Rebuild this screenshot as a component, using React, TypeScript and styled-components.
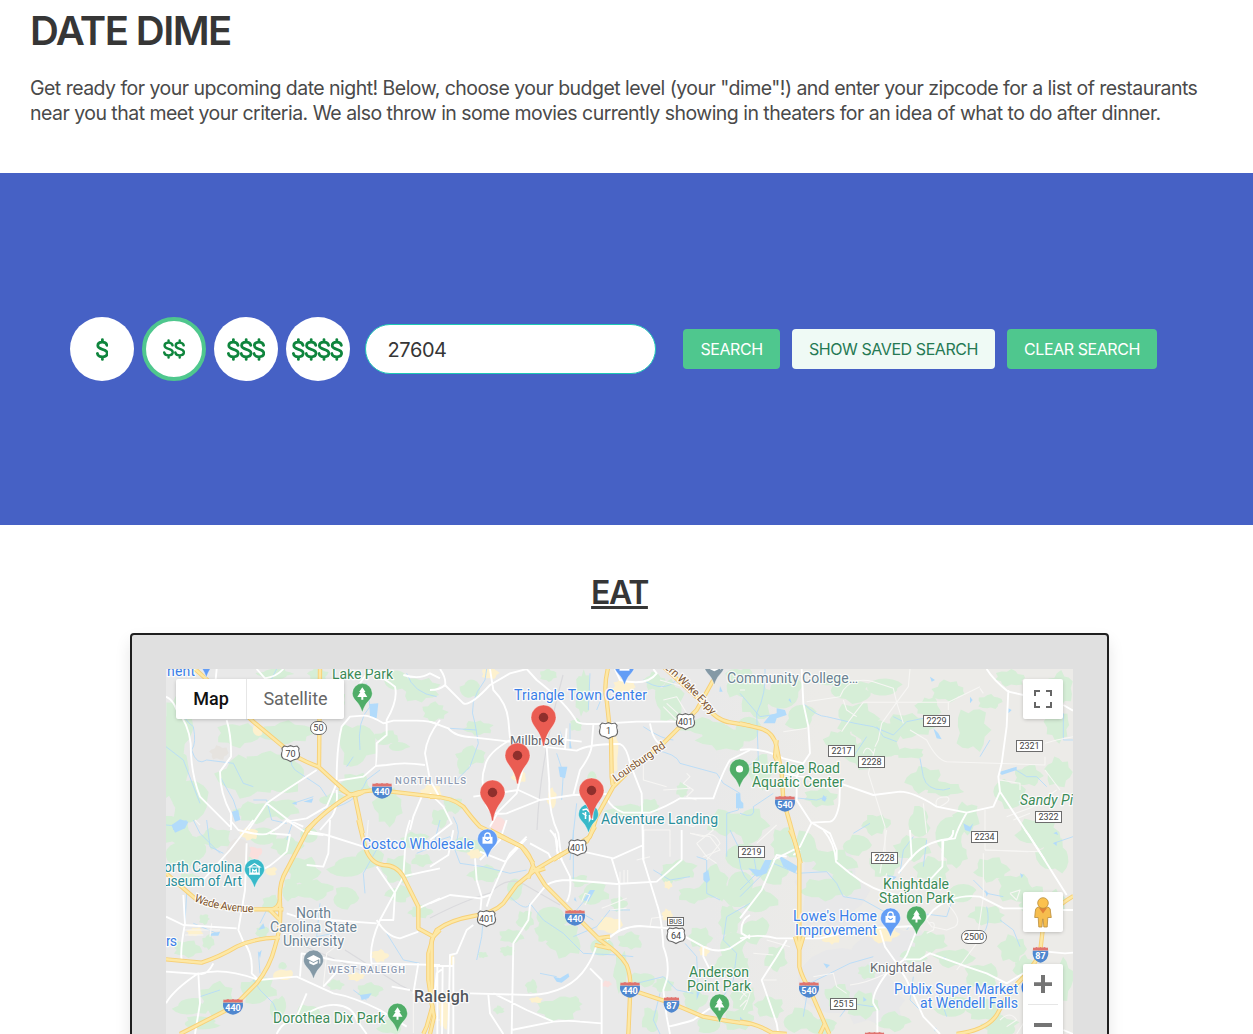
import React, { useState } from 'react';
import styled, { createGlobalStyle, css } from 'styled-components';

const GlobalStyle = createGlobalStyle`
  *, *::before, *::after { box-sizing: border-box; }
  body { margin: 0; background: #fff; font-family: Inter, 'Liberation Sans', sans-serif; color: #4a4a4a; }
  button, input { font-family: inherit; }
`;

const Page = styled.div`
  height: 1034px;
  overflow: hidden;
  display: flex;
  flex-direction: column;
`;

const Header = styled.header`
  height: 173px;
  flex: none;
  padding: 6px 30px 0;
`;

const Title = styled.h1`
  margin: 0;
  font-size: 40px;
  line-height: 50px;
  font-weight: 600;
  letter-spacing: -1.55px;
  color: #363636;
`;

const Intro = styled.p`
  margin: 0;
  font-size: 19.5px;
  line-height: 25px;
  white-space: nowrap;
  letter-spacing: -0.53px;
`;

const IntroBlock = styled.div`
  margin-top: 20px;
`;

const Hero = styled.section`
  height: 352px;
  flex: none;
  background: #4661c5;
  display: flex;
  align-items: center;
  padding-left: 70px;
`;

const Budgets = styled.div`
  display: flex;
  gap: 8px;
`;

const BudgetButton = styled.button<{ $active: boolean }>`
  width: 64px;
  height: 64px;
  padding: 0;
  display: flex;
  align-items: center;
  justify-content: center;
  border-radius: 50%;
  background: #fff;
  border: ${(p) => (p.$active ? '4px solid #4fc78e' : '0')};
`;

const Zip = styled.input`
  width: 291px;
  height: 50px;
  margin: 0 0 0 15px;
  padding: 1px 21.5px 0;
  border: 1px solid #1fc8b5;
  border-radius: 25px;
  background: #fff;
  color: #363636;
  font-size: 20px;
  letter-spacing: -0.4px;
  outline: none;
`;

const Actions = styled.div`
  display: flex;
  gap: 12px;
  margin-left: 27px;
`;

const Action = styled.button<{ $w: number; $light?: boolean }>`
  width: ${(p) => p.$w}px;
  height: 40px;
  padding: 0;
  border: 0;
  border-radius: 4px;
  font-size: 16px;
  letter-spacing: -0.43px;
  white-space: nowrap;
  ${(p) =>
    p.$light
      ? css`
          background: #effaf5;
          color: #257953;
        `
      : css`
          background: #4fc78e;
          color: #fff;
        `}
`;

const Eat = styled.section`
  flex: none;
  width: 1239px;
  padding-top: 48px;
  display: flex;
  flex-direction: column;
  align-items: center;
`;

const EatTitle = styled.h2`
  margin: 0 0 20px;
  font-size: 32px;
  line-height: 40px;
  font-weight: 600;
  letter-spacing: -1.4px;
  color: #363636;
  text-decoration: underline;
  text-decoration-thickness: 3px;
  text-underline-offset: 2px;
  text-decoration-skip-ink: none;
`;

const MapCard = styled.div`
  width: 979px;
  height: 500px;
  padding: 34px;
  border: 2px solid #1f1f1f;
  border-radius: 4px;
  background: #e0e0e0;
  box-shadow: 0 8px 16px rgba(10, 10, 10, 0.1);
`;

const MapFrame = styled.div`
  position: relative;
  width: 907px;
  height: 430px;
  overflow: hidden;
  background: #e9e9e9;
  font-family: Roboto, sans-serif;
`;

const MapDrawing = styled.svg`
  display: block;
  width: 907px;
  height: 430px;
  font-family: Roboto, sans-serif;
`;

const MapType = styled.div`
  position: absolute;
  left: 10px;
  top: 10px;
  display: flex;
  height: 40px;
  background: #fff;
  border-radius: 2px;
  box-shadow: 0 1px 4px -1px rgba(0, 0, 0, 0.3);
`;

const MapTab = styled.button<{ $on?: boolean }>`
  width: ${(p) => (p.$on ? 70 : 98)}px;
  padding: 0;
  border: 0;
  border-left: ${(p) => (p.$on ? '0' : '1px solid #e6e6e6')};
  background: transparent;
  font-family: Roboto, sans-serif;
  font-size: 18px;
  line-height: 40px;
  font-weight: ${(p) => (p.$on ? 500 : 400)};
  letter-spacing: -0.05px;
  color: ${(p) => (p.$on ? '#111' : '#666')};
`;

const Controls = styled.div`
  position: absolute;
  right: 10px;
  top: 10px;
  width: 40px;
  display: flex;
  flex-direction: column;
`;

const Control = styled.button<{ $top?: number; $h?: number }>`
  margin: ${(p) => p.$top ?? 0}px 0 0;
  height: ${(p) => p.$h ?? 40}px;
  padding: 0;
  border: 0;
  border-radius: 2px;
  background: #fff;
  box-shadow: 0 1px 4px -1px rgba(0, 0, 0, 0.3);
  display: flex;
  align-items: center;
  justify-content: center;
`;

const Dollars = ({ count, small }: { count: number; small: boolean }) => {
  const k = small ? 0.87 : 1;
  const w = count * 12.8;
  return (
    <svg width={w * k} height={23 * k} viewBox={`0 0 ${w} 23`} fill="none" stroke="#0f853d" strokeWidth={2.8} strokeLinecap="round">
      {Array.from({ length: count }, (_, i) => (
        <path
          key={i}
          transform={`translate(${i * 12.8} 0)`}
          d="M11 7.3C10.5 5.3 8.8 4.2 6.4 4.2C3.7 4.2 1.8 5.5 1.8 7.6C1.8 9.9 4 10.7 6.4 11.3C9.2 12 11.2 12.9 11.2 15.3C11.2 17.5 9.2 18.8 6.4 18.8C3.6 18.8 1.8 17.5 1.4 15.5M6.4 1.6V4M6.4 19V21.4"
        />
      ))}
    </svg>
  );
};

/* Map geometry: every sheet has its own origin and is drawn at three units to the pixel. */
type Sheet = 'A' | 'B' | 'C' | 'D' | 'E' | 'F';
const origin: Record<Sheet, [number, number]> = {
  A: [120, 620], B: [430, 660], C: [740, 660], D: [120, 820], E: [430, 830], F: [740, 830],
};
type Layer = Partial<Record<Sheet, string>>;

const highways: Layer = {
  A: 'M215 138L262 180L400 305L490 380Q520 412 595 440L650 490L690 525M600 147L597 440M560 630Q640 550 700 522Q740 508 790 512L960 532M660 505Q700 540 735 512M705 530L728 640',
  B: 'M0 410Q65 410 100 440Q130 480 150 500L275 560L310 610M535 20Q520 80 530 120L543 240L545 350L548 375M850 60L800 150L700 250L610 320L550 380L500 470L480 530L370 600M695 15L820 130Q860 182 900 187L960 197',
  C: 'M0 190L60 205Q100 215 110 260L125 340L130 420L150 490L182 610M110 240L105 290L125 330',
  D: 'M590 0L560 35L500 150Q475 190 480 250Q485 320 465 380Q450 440 410 490L340 560L180 642M715 0L735 80Q750 130 790 135Q830 135 850 170L895 260L895 325L940 350L960 330M138 160L225 235Q290 268 400 268L490 268M138 418L245 428Q300 410 350 380Q400 355 480 352M940 350L925 400L925 480L937 560L920 620L910 642M450 270Q480 265 480 235M450 270L480 300',
  E: 'M180 0L275 50Q300 70 310 110L345 165L410 230L510 330Q570 370 590 405Q605 440 600 500L595 612M495 -10L470 35L390 75L315 120L260 165L220 220Q190 250 130 258Q60 270 20 300L5 330L5 520L12 560L0 612M295 145L310 105M315 125L345 115M605 480L725 520L820 560Q900 575 960 582M495 345L540 355M540 320L500 325',
  F: 'M150 0Q170 40 178 90L178 410Q185 440 210 480L268 612M0 575Q50 580 95 608L140 612M1000 198Q920 245 908 300L900 370Q870 430 810 480Q790 520 770 555Q740 600 650 612M165 320L178 360L190 320M240 612L255 580',
};

const streets: Layer = {
  A: 'M138 230Q160 240 170 270Q205 310 212 370Q212 460 240 530L330 620M290 147L285 200M320 300Q335 350 333 410L300 455Q300 520 333 580L333 630M590 450L490 515L440 550L385 630M440 550L505 600L550 620M500 605L560 595L620 560L650 490M410 147L435 175Q470 170 490 147M650 480Q650 380 665 320L690 290L730 287Q750 285 790 310L820 302L890 302Q930 302 960 315M740 147Q800 180 825 200Q835 240 800 300L800 345L770 370Q770 440 765 440L730 470L655 482M765 438L800 435Q850 425 915 435M850 165Q900 180 930 160L960 175M960 300Q920 350 915 400L930 480L955 525M905 530L880 590L870 630M650 510Q655 560 635 590L600 630M750 147L720 190',
  B: 'M0 185L55 205Q75 230 130 232L240 245M0 90Q30 90 45 75L100 130Q120 140 180 75L240 40L290 27M30 27Q50 55 45 80M180 27L190 90Q230 130 235 180L240 235M290 27L320 60Q410 130 440 185Q450 193 500 192L620 185L760 185M340 260L440 272Q480 250 570 252Q590 260 600 310L635 400L640 600M490 195L485 260Q480 290 450 330L430 405M350 260L358 370Q355 460 385 520L395 600M405 265L410 205M240 240Q170 280 165 320Q150 360 165 400Q160 470 230 460L330 420L430 405L530 402M530 415Q545 445 580 458L660 458Q710 440 750 415L850 415Q880 330 900 300L960 270M180 500L205 455L260 400L280 320M0 400L40 440L65 490L0 540M130 410L265 390L330 420M230 480L210 540L150 600M555 27L570 60Q650 80 680 40L670 27M660 190Q670 250 700 255M370 235Q420 240 455 245M385 600L375 520',
  C: 'M185 27L190 130L205 200L210 280L190 310M190 310L130 295Q60 260 0 270M190 310L170 350L170 420L215 490M130 340L300 370L400 405L480 395Q520 395 590 440L680 458L760 440L780 395L915 600M740 27Q760 60 805 95L850 105M805 90L800 200L785 310L775 350L780 395M300 370L298 430Q290 480 270 485L215 488L180 560L100 600M215 488L270 520L290 570L290 600M680 458Q650 510 645 535L605 540Q540 555 510 600M607 540L607 600M970 135L999 152',
  D: 'M330 0L355 30Q430 50 445 40L475 22L500 0L560 40L610 45M400 0L330 90L240 190M450 40L510 45L500 95Q450 140 435 145L380 165M380 70L375 210L355 330L370 365Q400 400 395 460L415 480M630 0L625 100L610 140L560 135M570 35L620 45L730 80M870 0Q850 60 855 90L850 170L780 300Q745 380 755 430L960 435M770 140L825 220L820 300L780 300M500 280L530 290L630 300L770 310M770 300Q800 350 840 355L895 335M855 168Q910 155 960 145M138 290L190 315L350 325M190 225L195 310Q180 390 185 420M138 455L235 462Q310 440 415 480L530 470L640 520Q700 530 780 570L860 620M280 430Q260 470 235 460Q160 510 138 550M235 460L240 550L225 642M540 470L545 400L640 420L755 435M610 500L660 445M470 642Q490 600 530 600Q600 550 650 555Q700 560 710 600L740 642M895 430L880 520M815 500L870 510M895 265L960 235M560 520L530 590',
  E: 'M135 85L140 150L155 200L150 255M290 20L240 70L215 120L180 200L170 230M300 40L355 70L365 90M360 0Q390 30 380 60L420 140Q425 190 410 215M150 65L225 95L290 25M0 220L60 195L150 205L180 195M0 110L55 75L70 0M345 170L300 225L295 270L250 340L245 612M350 165Q370 150 420 150L560 162L680 155L755 90L755 0M640 0L640 50L640 90L680 220Q695 260 700 350Q720 400 710 450L700 480L710 560L720 612M640 45L550 85L460 65M545 85L568 160L568 300L530 330M500 345Q490 380 470 410Q420 490 300 495L120 490M130 285L110 300L80 370L60 375L55 612M480 415L515 450L515 612M530 330Q570 290 630 288L720 295L820 350Q860 370 900 355L960 315M820 350L820 380L840 420M40 415L20 430L15 480M0 408L70 408M22 410L22 612M38 410L36 612M70 380L70 612M175 495L180 550L220 612M190 490L230 510L290 540L370 575Q420 570 450 575L515 580M245 600L370 575M715 590Q760 580 790 570L840 535M960 255Q930 270 935 310L960 325',
  F: 'M250 0Q285 40 288 95L330 130Q400 185 470 195M140 80L110 75L65 180L0 265M160 75L180 60M510 0L515 80L475 130M640 0Q640 30 610 30L607 110L560 160M855 0L870 20L980 195M0 325Q50 310 110 325L240 325L370 295L530 288Q550 280 580 240Q640 190 720 200L790 235L850 235M140 330L110 380L65 450L110 580L115 612M420 300L435 350L470 400L500 450L550 560L600 612M530 300L500 375L490 390L440 430Q395 490 400 520L412 540L412 612M490 388L540 388L570 370L680 410L740 430L800 460L850 430M920 365L975 370L999 368M960 240L999 240M970 600L999 612',
};

const lanes: Layer = {
  B: 'M700 120L740 110L770 160M710 130L760 175M700 140L740 180M640 300L640 360L710 380M700 390L780 385M770 340L780 350L760 370L790 390L770 410L800 420M640 460L640 510L720 510L720 590M720 480L790 500Q830 470 850 510L800 550M780 520L840 530L870 570L820 590M660 590L620 600M690 60L760 80',
  C: 'M200 125L300 110L310 90Q340 50 400 65L460 85L470 127M470 127L625 127L720 80M470 127L370 127Q320 190 305 215M310 120L320 150L350 170M470 127L425 190L415 240L405 260M510 27L505 80L470 127M470 127L490 190M510 210L560 240Q590 300 620 305L915 315L915 290M915 250L950 240L999 230M915 330L960 390M405 265L385 340L410 420L435 500L435 600M550 430L560 520M590 440Q580 410 620 410Q640 420 600 440M370 280Q380 250 400 280M625 125L625 150M720 85L730 100M735 570L900 575M735 450L735 570M780 360L840 370L840 390M800 470L880 440L950 390M820 480L870 460M130 215L200 205M0 90L15 90M50 550L110 495',
  D: 'M190 330L300 330M195 345L250 345M270 350L275 310M225 0L240 15M620 300L660 370L620 400L610 500M555 400L600 430M740 60L745 0M930 600L960 600M880 510L880 640',
  E: 'M570 125L570 160M582 120L582 160M593 120L593 160M455 215L465 190L480 195L465 225M515 235L540 225L590 205M540 240L590 235M660 290L665 265L700 260M780 10L820 20Q850 0 870 40L830 90M800 40L830 80L860 100M930 510Q945 480 960 490L950 520L940 540',
  F: 'M730 70L730 200L710 340L650 420M735 60L865 65M620 220Q670 270 645 290L620 300L575 290L560 270M420 130L440 0M440 130L430 170M810 190L840 180L830 210L810 190M565 280Q590 270 580 300L560 310M220 440L280 430L290 470L320 490M70 450L110 450M0 480L20 500M780 570Q810 540 830 570L800 590M850 580L830 612M40 370L100 375M80 330L150 350M20 510L0 530M440 430Q380 460 330 465',
};

const streams: Layer = {
  A: 'M190 180L175 250Q190 300 220 320Q230 370 215 390Q230 440 260 420L340 430L370 490L400 500M138 380L190 420L240 550M520 400Q500 440 540 460L600 500L620 530M740 190L750 260Q710 300 720 390M780 450L740 480Q710 560 600 570M520 550L580 530M470 147Q440 210 380 300M860 160Q880 220 950 230M300 470L340 540L360 600M400 540L440 540L455 600L500 610M700 410L680 440',
  B: 'M170 27L165 60Q110 130 135 190L145 250L120 320L60 380M480 40L475 150M420 190L420 260M60 205L140 210M380 280L400 340L395 420M440 430L430 520L420 600M670 270Q740 280 750 310L860 340L880 370L930 400L925 450L890 460L890 590M640 200Q700 240 730 240M480 410L510 430M70 470Q100 520 70 560M500 150L525 90M640 60Q700 100 740 60',
  C: 'M75 27Q80 100 50 160L55 300L0 330M0 100L60 170L130 160M190 130Q230 170 260 170L345 190L400 200L460 225L500 185L550 175M410 200L430 230L470 245M540 295L550 350Q560 390 610 390L630 385M780 340L820 325L860 350L890 350L920 380M970 160L970 240L999 240M125 410L180 415L230 420L260 410M0 460Q50 480 40 440L100 400M380 230L340 290M490 185L460 170M720 290L750 240M340 520L390 490',
  D: 'M220 0L240 40L300 100M260 0L270 80L310 100M138 15L190 20M220 310L290 340M200 220L195 310M735 220L730 160L780 70M960 0L940 80L890 100M520 0L500 60M420 310L440 270M415 395L420 460M400 480L420 510L460 550L480 600M240 530L300 510M700 510L740 540M800 340L850 420L900 430M600 250L590 350L640 340',
  E: 'M0 40L60 20L90 100L160 110L240 130L290 120M160 265L155 320L140 390M240 200Q290 250 300 220L340 270L400 310Q430 340 460 370L560 375L610 380M430 0L430 150M490 180L440 240L490 270M800 80L830 90L830 190L870 210M960 220L890 260L880 330L920 370L910 450L880 500M900 0L930 60Q920 120 960 160M765 340L800 380L805 480M380 440L330 430M600 240L540 240L500 290L430 320M620 460L700 440L740 480L790 490M670 120L720 150L780 140M690 490L670 570L690 612',
  F: 'M0 200Q50 150 100 100L170 130L260 125L290 160L310 200L370 210L460 260M0 60L40 70L50 130L0 180M640 200L620 260L540 250L500 300M740 230Q760 310 690 340M780 270L820 300L840 350M400 380L330 400L210 460M200 500L190 560M520 440L510 510L540 540M940 40L999 20M550 110L560 30M300 560L330 520L400 530M480 130L490 60L520 20M700 150L740 190L790 200M590 470L620 560',
};

const ponds: Layer = {
  A: 'M155 615L180 598L205 605L195 625L160 630ZM748 252L775 250L770 295L750 290ZM335 575L355 570L360 600L345 605ZM515 550L530 545L530 555ZM550 545L580 535L575 548Z',
  B: 'M385 320L412 320L405 355L390 350ZM420 240L425 265L418 265ZM918 400L930 400L935 445L918 445ZM870 78L878 95L868 95ZM390 210L400 240L395 240Z',
  C: 'M70 190L90 165L110 160L110 145L135 150L140 165L110 175L105 190ZM580 205L595 220L605 238L590 235ZM670 490L690 500L700 490L690 515L675 510ZM250 405L260 415L255 425L245 420ZM780 335L830 320L830 330L785 345ZM570 50L585 60L575 65ZM0 420L10 430L10 445L0 445ZM940 520L950 515L955 525ZM690 110L698 120L690 130ZM805 145L815 150L805 160ZM145 120L150 115L155 130Z',
  D: 'M155 15L200 0L195 25L165 38ZM275 340L300 335L295 347L270 347ZM720 525L755 520L745 535L725 540ZM415 330L430 310L435 325ZM415 400L425 390L420 415Z',
  E: 'M370 440L390 445L415 430L418 440L395 458L380 455ZM820 130L835 120L840 150L830 160L820 150ZM460 210L480 180L495 180L475 215ZM800 470L812 480L800 510ZM435 200L440 215L432 210ZM930 560L940 570L930 575Z',
  F: 'M25 115L60 120L75 90L95 90L80 130L50 140ZM115 75L150 95L175 110L165 130L130 110ZM250 400L270 405L260 415ZM735 180L745 190L740 200ZM370 500L380 510L370 515ZM940 40L950 35L950 48ZM440 135L470 140L460 150ZM610 380L620 385L612 390ZM580 590L590 595L585 605ZM840 130L850 135L845 145ZM340 255L345 265L338 262Z',
};

const woods: [number, number, number, number][] = [
  [176, 728, 15, 30], [172, 770, 14, 36], [188, 800, 20, 20], [176, 830, 16, 14], [205, 700, 12, 8], [238, 735, 20, 12], [286, 733, 24, 11], [268, 762, 24, 10],
  [248, 778, 28, 20], [285, 774, 24, 16], [254, 812, 20, 10], [280, 809, 18, 10], [275, 674, 17, 5], [318, 675, 10, 7], [356, 744, 18, 22], [387, 738, 12, 7],
  [398, 747, 10, 5], [355, 785, 16, 12], [330, 800, 14, 6], [388, 806, 14, 18], [420, 690, 18, 12], [396, 680, 12, 10], [434, 712, 12, 9], [338, 700, 8, 7],
  [470, 689, 9, 10], [479, 728, 14, 7], [471, 756, 14, 9], [463, 766, 6, 8], [440, 818, 9, 9], [470, 846, 18, 8], [454, 805, 10, 8], [548, 675, 8, 6],
  [583, 693, 7, 22], [576, 725, 6, 6], [670, 702, 14, 20], [655, 682, 10, 9], [700, 726, 22, 8], [724, 738, 26, 12], [748, 730, 14, 14], [740, 683, 15, 16],
  [757, 700, 15, 20], [628, 811, 22, 6], [650, 806, 9, 7], [724, 823, 18, 12], [750, 826, 18, 16], [745, 856, 18, 12], [761, 772, 11, 16], [682, 790, 6, 7], [592, 780, 5, 9],
  [784, 692, 18, 16], [800, 717, 15, 12], [829, 680, 17, 7], [850, 692, 21, 10], [884, 688, 18, 9], [857, 719, 21, 16], [879, 737, 24, 19], [866, 755, 21, 13], [841, 742, 15, 12],
  [910, 726, 23, 12], [928, 708, 12, 10], [949, 691, 16, 10], [972, 730, 16, 22], [990, 702, 11, 7], [1010, 678, 14, 8], [1060, 688, 12, 16], [1058, 725, 12, 16],
  [924, 780, 17, 13], [944, 789, 18, 7], [910, 753, 16, 5], [1010, 794, 17, 13], [1028, 776, 13, 10], [1058, 772, 12, 14], [1038, 832, 20, 15], [1054, 856, 16, 17],
  [966, 818, 13, 15], [950, 836, 15, 18], [918, 822, 11, 14], [912, 848, 18, 12], [876, 824, 13, 10], [857, 845, 15, 9], [833, 862, 22, 12], [804, 848, 15, 15], [783, 842, 12, 14],
  [821, 798, 16, 9], [772, 872, 18, 12], [760, 900, 16, 12], [739, 888, 15, 18], [755, 930, 14, 12], [776, 958, 11, 12], [823, 889, 20, 11], [845, 883, 14, 12],
  [884, 866, 14, 12], [933, 870, 17, 13], [955, 854, 12, 12], [962, 894, 13, 9], [991, 870, 16, 12], [1015, 888, 17, 14], [1035, 902, 14, 14], [987, 915, 17, 9],
  [930, 942, 17, 10], [914, 955, 12, 8], [954, 958, 18, 9], [982, 976, 17, 12], [1012, 949, 14, 14], [1024, 968, 10, 12], [954, 1007, 17, 10], [984, 1010, 19, 10], [1000, 1026, 18, 9], [1055, 905, 10, 14], [1062, 980, 10, 20],
  [864, 1005, 16, 13], [893, 1022, 16, 9], [838, 996, 13, 11], [800, 1020, 17, 11], [770, 1007, 14, 10], [744, 999, 12, 16], [823, 1026, 14, 8], [867, 972, 9, 7], [740, 966, 10, 10],
  [186, 852, 22, 15], [216, 839, 16, 10], [240, 857, 12, 6], [188, 879, 10, 6], [263, 836, 14, 9], [287, 846, 15, 9], [303, 872, 16, 14], [315, 890, 17, 9], [291, 890, 9, 10], [309, 835, 9, 8],
  [350, 867, 20, 10], [370, 858, 17, 11], [397, 870, 14, 14], [415, 840, 13, 8], [422, 860, 10, 6], [346, 898, 14, 10], [399, 894, 13, 8], [420, 912, 11, 6], [204, 919, 5, 5],
  [187, 949, 14, 8], [208, 942, 6, 7], [271, 904, 9, 9], [262, 932, 6, 7], [283, 966, 4, 4], [336, 985, 8, 5], [258, 990, 17, 13], [218, 999, 18, 15], [191, 1007, 16, 8], [200, 1023, 18, 6], [278, 1007, 8, 11], [310, 1012, 11, 8], [370, 990, 12, 7], [390, 1027, 12, 7],
  [485, 874, 16, 8], [514, 889, 8, 10], [525, 920, 8, 10], [512, 936, 12, 7], [552, 916, 15, 10], [564, 940, 17, 17], [545, 931, 10, 12], [594, 894, 13, 11], [580, 881, 8, 6], [619, 904, 8, 7], [630, 941, 12, 8], [602, 947, 12, 9], [557, 1010, 19, 11], [569, 1004, 14, 8], [532, 987, 6, 7], [499, 1010, 5, 4], [483, 955, 5, 3], [507, 951, 7, 5],
  [621, 972, 7, 20], [643, 979, 12, 7], [663, 985, 10, 7], [650, 1020, 8, 12], [680, 870, 16, 10], [693, 895, 14, 8], [715, 884, 14, 17], [730, 920, 11, 15], [734, 947, 12, 13], [700, 938, 11, 10], [695, 1000, 12, 10], [723, 965, 9, 10], [738, 1020, 15, 10], [708, 1024, 13, 8], [670, 874, 10, 9],
];

const builtUp: [number, number, number, number, string][] = [
  [258, 729, 5, 6, '#fdf1ce'], [249, 834, 8, 6, '#fdf1ce'], [432, 792, 10, 7, '#fdf1ce'], [490, 673, 8, 6, '#fdf1ce'], [519, 776, 7, 7, '#fdf1ce'], [552, 798, 5, 9, '#fdf1ce'], [614, 752, 4, 22, '#fdf1ce'],
  [624, 687, 12, 8, '#fdf1ce'], [610, 925, 12, 8, '#fdf1ce'], [667, 915, 5, 6, '#fdf1ce'], [704, 951, 5, 5, '#fdf1ce'], [668, 885, 4, 4, '#fdf1ce'], [831, 936, 9, 8, '#fdf1ce'], [884, 934, 15, 8, '#fdf1ce'], [283, 975, 9, 6, '#fdf1ce'],
  [380, 956, 8, 6, '#fdf1ce'], [356, 977, 8, 4, '#fdf1ce'], [271, 871, 6, 4, '#fdf1ce'], [475, 854, 7, 5, '#fdf1ce'], [195, 932, 8, 4, '#fdf1ce'], [444, 1010, 5, 18, '#fdf1ce'], [452, 960, 3, 5, '#fdf1ce'], [254, 853, 8, 6, '#fadfdd'], [497, 825, 8, 7, '#fadfdd'], [607, 984, 5, 3, '#fadfdd'],
  [219, 753, 9, 7, '#e6e3df'], [238, 858, 12, 18, '#e8e5e3'], [536, 1000, 6, 3, '#fdf1ce'],
];

const blob = (cx: number, cy: number, rx: number, ry: number) => {
  const n = 17;
  const points: string[] = [];
  for (let i = 0; i < n; i += 1) {
    const noise = Math.abs(Math.sin(cx * 12.9 + cy * 78.2 + i * 37.7) * 437.5) % 1;
    const r = 0.74 + noise * 0.5;
    const a = (i / n) * Math.PI * 2;
    points.push(`${(cx + Math.cos(a) * rx * r).toFixed(1)} ${(cy + Math.sin(a) * ry * r).toFixed(1)}`);
  }
  return `M${points.join('L')}Z`;
};

const Lines = ({ layer, ...rest }: { layer: Layer } & React.SVGProps<SVGGElement>) => (
  <g fill="none" strokeLinejoin="round" {...rest}>
    {(Object.keys(layer) as Sheet[]).map((k) => (
      <path key={k} d={layer[k]} transform={`translate(${origin[k][0]} ${origin[k][1]}) scale(.33333)`} />
    ))}
  </g>
);

const green = '#3b8b57';
const blue = '#3a7fe8';
const teal = '#2b8f9b';
const slate = '#6b8292';

interface Label { t: string; x: number; y: number; w: number; c: string; s?: number; b?: number; i?: boolean }
const labels: Label[] = [
  { t: 'nent', x: 167, y: 675.5, w: 28, c: blue },
  { t: 'Lake Park', x: 332, y: 679, w: 61, c: green },
  { t: 'Triangle Town Center', x: 514, y: 700, w: 133, c: blue },
  { t: 'Community College…', x: 727, y: 683, w: 131, c: slate },
  { t: 'Millbrook', x: 510, y: 745, w: 54, c: '#61656b', s: 13 },
  { t: 'NORTH HILLS', x: 395, y: 784, w: 71, c: '#8e9bb3', s: 9.5, b: 500 },
  { t: 'Buffaloe Road', x: 752, y: 772.5, w: 88, c: green },
  { t: 'Aquatic Center', x: 752, y: 786.5, w: 92, c: green },
  { t: 'Adventure Landing', x: 601, y: 824, w: 117, c: teal },
  { t: 'Costco Wholesale', x: 362, y: 849.3, w: 112, c: blue },
  { t: 'orth Carolina', x: 164, y: 872.3, w: 78, c: teal },
  { t: 'useum of Art', x: 163, y: 886.3, w: 79, c: teal },
  { t: 'North', x: 296, y: 918.3, w: 35, c: slate },
  { t: 'Carolina State', x: 270, y: 932.3, w: 87, c: slate },
  { t: 'University', x: 283, y: 946.3, w: 61, c: slate },
  { t: 'rs', x: 166, y: 946.3, w: 11, c: blue },
  { t: 'WEST RALEIGH', x: 328, y: 973.3, w: 77, c: '#8e9bb3', s: 9.5, b: 500 },
  { t: 'Raleigh', x: 414, y: 1002, w: 55, c: '#52565c', s: 16, b: 500 },
  { t: 'Dorothea Dix Park', x: 273, y: 1023.3, w: 112, c: green },
  { t: 'Anderson', x: 689, y: 976.5, w: 60, c: green },
  { t: 'Point Park', x: 687, y: 990.5, w: 64, c: green },
  { t: 'Knightdale', x: 883, y: 888.5, w: 66, c: green },
  { t: 'Station Park', x: 879, y: 902.5, w: 75, c: green },
  { t: "Lowe's Home", x: 793, y: 921.3, w: 84, c: blue },
  { t: 'Improvement', x: 795, y: 935.3, w: 82, c: blue },
  { t: 'Knightdale', x: 870, y: 972, w: 62, c: '#666a70', s: 13 },
  { t: 'Publix Super Market', x: 894, y: 993.5, w: 124, c: blue },
  { t: 'at Wendell Falls', x: 920, y: 1007.5, w: 98, c: blue },
  { t: 'Sandy Pi', x: 1020, y: 804.5, w: 53, c: green, i: true },
];

const MapLabel = ({ t, x, y, w, c, s = 14, b = 400, i }: Label) => (
  <text x={x} y={y} fill={c} fontSize={s} fontWeight={b} fontStyle={i ? 'italic' : undefined} textLength={w}
    stroke="#fff" strokeOpacity={0.85} strokeWidth={2.4} paintOrder="stroke" strokeLinejoin="round">{t}</text>
);

type Sign = [string, number, number];
const countySigns: Sign[] = [['2229', 936.5, 721], ['2321', 1029.5, 746], ['2217', 841.5, 751], ['2228', 871.5, 762], ['2322', 1048.5, 817], ['2234', 984.5, 837], ['2219', 751.5, 852], ['2228', 884.5, 858], ['2515', 843.5, 1004]];
const usSigns: Sign[] = [['70', 290.5, 753.5], ['1', 608.5, 730.5], ['401', 685.5, 721.5], ['401', 577.5, 847.5], ['401', 486.5, 918.5], ['64', 676, 935.5]];
const interstateSigns: Sign[] = [['440', 382, 791], ['540', 785, 804], ['440', 233, 1007], ['440', 575, 918], ['440', 630, 990], ['87', 671.5, 1005], ['540', 809, 990], ['87', 1040.5, 955], ['', 874.5, 1040]];

const UsSign = ({ t, x, y }: { t: string; x: number; y: number }) => (
  <g transform={`translate(${x} ${y})`}>
    <path d="M-6.5-7.5L-3-6.8L0-7.8L3-6.8L6.5-7.5L8.5-5.2Q7.6-3 8.8-.5Q9.8 2.8 7.2 5.2Q3.2 5.8 0 8Q-3.2 5.8-7.2 5.2Q-9.8 2.8-8.8-.5Q-7.6-3-8.5-5.2Z" fill="#fff" stroke="#686868" strokeWidth="1.1" />
    <text y="3.3" textAnchor="middle" fontSize="9" fill="#444">{t}</text>
  </g>
);

const InterstateSign = ({ t, x, y }: { t: string; x: number; y: number }) => {
  const w = t === '87' ? 0.78 : 1;
  return (
    <g transform={`translate(${x} ${y})`}>
      <g transform={`scale(${w} 1)`}>
        <path d="M-9.5-7.5Q-7-6.8-5-8Q-2.5-6.8 0-8Q2.5-6.8 5-8Q7-6.8 9.5-7.5L9.8-4.6H-9.8Z" fill="#e0736e" />
        <path d="M-9.9-4.3H9.9Q10.8 2.2 5.8 5.6Q3 7.3 0 7.8Q-3 7.3-5.8 5.6Q-10.8 2.2-9.9-4.3Z" fill="#4f87cf" />
      </g>
      <text y="3.8" textAnchor="middle" fontSize="9" fontWeight="700" fill="#fff">{t}</text>
    </g>
  );
};

type Kind = 'tree' | 'bag' | 'dot' | 'museum' | 'school' | 'fun';
const kindColor: Record<Kind, string> = { tree: '#50ad68', bag: '#639df5', dot: '#50ad68', museum: '#38b9c9', school: '#8499a6', fun: '#38b9c9' };
const places: [Kind, number, number][] = [
  ['fun', 588.5, 804], ['tree', 362.3, 683.3], ['tree', 397.5, 1003.2], ['tree', 719.5, 994], ['tree', 916.5, 906], ['bag', 487.5, 829], ['bag', 890.5, 908], ['bag', 624.5, 656], ['bag', 206.3, 648.5],
  ['dot', 739.5, 759], ['museum', 254.5, 859], ['school', 313.5, 950], ['school', 714.3, 656],
];

const Place = ({ kind, x, y }: { kind: Kind; x: number; y: number }) => (
  <g transform={`translate(${x} ${y})`}>
    <path d="M0 0A10 10 0 0 1 10 10C10 15 6 17.5 3.5 21.2Q1.5 24.3 0 29Q-1.5 24.3-3.5 21.2C-6 17.5-10 15-10 10A10 10 0 0 1 0 0Z" fill={kindColor[kind]} stroke="#fff" strokeOpacity=".6" strokeWidth=".7" />
    {kind === 'tree' && <path d="M0 4L3.2 8.7H1.9L5 13.6H1V16.5H-1V13.6H-5L-1.9 8.7H-3.2Z" fill="#fff" />}
    {kind === 'dot' && <circle cy="10" r="3.6" fill="#fff" />}
    {kind === 'bag' && (
      <>
        <path d="M-5 7.8H5V14.7H-5Z" fill="#fff" />
        <path d="M-2.7 8V6.7A2.7 2.7 0 0 1 2.7 6.7V8" fill="none" stroke="#fff" strokeWidth="1.3" />
        <path d="M-2.2 10.2Q0 13.3 2.2 10.2" fill="none" stroke={kindColor.bag} strokeWidth="1.2" />
      </>
    )}
    {kind === 'museum' && <path d="M-5.2 8L0 4.8L5.2 8ZM-4.6 8.6V14.2H4.6V8.6M-5.5 15.2H5.5M-1.8 13.5V10.5L0 12L1.8 10.5V13.5" fill="none" stroke="#fff" strokeWidth="1.2" />}
    {kind === 'school' && <path d="M-6.8 8.5L0 5L6.8 8.5L0 12ZM-4.2 10.8V13.2L0 15.3L4.2 13.2V10.8L0 13ZM5.8 9V13.5H6.8V8.5Z" fill="#fff" />}
    {kind === 'fun' && <path d="M-6 6L-2 5L1 8M-6 9L-2 12M-3 8V15M1 11V16L4 11V16" fill="none" stroke="#fff" strokeWidth="1.5" />}
  </g>
);

const restaurants: [number, number][] = [[543.5, 705], [517.5, 743], [492.5, 780], [591.5, 778]];

const CityMap = () => (
  <MapDrawing viewBox="166 669 907 430">
    <defs>
      <linearGradient id="ground" x1="0" x2="1">
        <stop offset=".6" stopColor="#e9e9e9" />
        <stop offset=".72" stopColor="#ecebe8" />
      </linearGradient>
      <path id="wade" d="M194 901Q214 911 256 912.5" />
      <path id="louisburg" d="M616 782L668 746" />
      <path id="wake" d="M664 668Q690 690 713 717" />
    </defs>
    <rect x="166" y="669" width="907" height="430" fill="url(#ground)" />
    <path d={blob(838, 985, 42, 34) + blob(875, 1000, 30, 26) + blob(890, 950, 34, 24) + blob(830, 890, 34, 40)} fill="#e8e8e9" />
    <path d={woods.map(([x, y, rx, ry]) => blob(x, y, rx, ry)).join('')} fill="#d6eed7" fillRule="nonzero" />
    {builtUp.map(([x, y, rx, ry, c]) => <path key={`${x}-${y}`} d={blob(x, y, rx, ry)} fill={c} />)}
    <Lines layer={streams} stroke="#b5dbf9" strokeWidth={2.6} />
    <Lines layer={ponds} fill="#b2dbfb" />
    <path d="M430 918Q465 900 490 893Q505 878 520 882L560 905M345 950L400 985L430 1000M563 675Q540 760 537 830M290 940L360 970" fill="none" stroke="#dadadd" strokeWidth="1.2" />
    <Lines layer={lanes} stroke="#f7f6f4" strokeWidth={3.2} />
    <Lines layer={streets} stroke="#fff" strokeWidth={5.6} />
    <Lines layer={highways} stroke="#f7d077" strokeWidth={13} />
    <Lines layer={highways} stroke="#fde8a5" strokeWidth={7.5} />
    {places.map(([k, x, y]) => <Place key={x} kind={k} x={x} y={y} />)}
    {labels.map((l) => <MapLabel key={`${l.t}${l.y}`} {...l} />)}
    <path d="M1023.5 983Q1021 987.500 1023.500 992" fill="none" stroke={blue} strokeWidth="1.6" />
    <g fontSize="11" fill="#7b5430" stroke="#fff" strokeOpacity=".85" strokeWidth="2.2" paintOrder="stroke">
      <text textLength="61"><textPath href="#wade">Wade Avenue</textPath></text>
      <text textLength="61"><textPath href="#louisburg">Louisburg Rd</textPath></text>
      <text textLength="67"><textPath href="#wake">ern Wake Expy</textPath></text>
    </g>
    {countySigns.map(([t, x, y]) => (
      <g key={`${t}${x}`}>
        <rect x={x - 13} y={y - 5.5} width="26" height="11" fill="#fff" stroke="#6c6c6c" />
        <text x={x} y={y + 3.2} fontSize="9" fill="#444" textAnchor="middle">{t}</text>
      </g>
    ))}
    {usSigns.map(([t, x, y]) => <UsSign key={`${t}${x}`} t={t} x={x} y={y} />)}
    {interstateSigns.map(([t, x, y]) => <InterstateSign key={`${t}${x}`} t={t} x={x} y={y} />)}
    <rect x="310.5" y="721.5" width="16" height="13" rx="6.5" fill="#fff" stroke="#6c6c6c" />
    <text x="318.4" y="731.2" fontSize="9" fill="#444" textAnchor="middle">50</text>
    <rect x="961.5" y="930.5" width="25" height="13" rx="6.5" fill="#fff" stroke="#6c6c6c" />
    <text x="974" y="940.2" fontSize="9" fill="#444" textAnchor="middle">2500</text>
    <rect x="667.5" y="917.5" width="16" height="8" fill="#fff" stroke="#6c6c6c" />
    <text x="675.5" y="924.2" fontSize="7" fill="#444" textAnchor="middle">BUS</text>
    {restaurants.map(([x, y]) => (
      <g key={x} transform={`translate(${x} ${y})`}>
        <path d="M0 0A12.5 12.5 0 0 1 12.5 12.5C12.5 18 8.5 21.5 5.3 27C2.5 32 1.3 36 .9 40Q.7 41 0 41Q-.7 41-.9 40C-1.3 36-2.5 32-5.3 27C-8.5 21.5-12.5 18-12.5 12.5A12.5 12.5 0 0 1 0 0Z" fill="#ea5c52" stroke="#fff" strokeOpacity=".5" strokeWidth=".8" />
        <circle cy="12.5" r="4.7" fill="#8f2f2c" />
      </g>
    ))}
  </MapDrawing>
);

const budgets = [1, 2, 3, 4];

export default function App() {
  const [budget, setBudget] = useState(2);
  const [zip, setZip] = useState('27604');
  return (
    <>
      <GlobalStyle />
      <Page>
        <Header>
          <Title>DATE DIME</Title>
          <IntroBlock>
            <Intro>Get ready for your upcoming date night! Below, choose your budget level (your "dime"!) and enter your zipcode for a list of restaurants</Intro>
            <Intro>near you that meet your criteria. We also throw in some movies currently showing in theaters for an idea of what to do after dinner.</Intro>
          </IntroBlock>
        </Header>
        <Hero>
          <Budgets>
            {budgets.map((n) => (
              <BudgetButton key={n} $active={budget === n} onClick={() => setBudget(n)}>
                <Dollars count={n} small={budget === n} />
              </BudgetButton>
            ))}
          </Budgets>
          <Zip value={zip} onChange={(e) => setZip(e.target.value)} />
          <Actions>
            <Action $w={97}>SEARCH</Action>
            <Action $w={203} $light>SHOW SAVED SEARCH</Action>
            <Action $w={150}>CLEAR SEARCH</Action>
          </Actions>
        </Hero>
        <Eat>
          <EatTitle>EAT</EatTitle>
          <MapCard>
            <MapFrame>
              <CityMap />
              <MapType>
                <MapTab $on>Map</MapTab>
                <MapTab>Satellite</MapTab>
              </MapType>
              <Controls>
                <Control>
                  <svg width="18" height="18" viewBox="0 0 18 18" fill="#666"><path d="M0 0V6H2V2H6V0ZM16 0H12V2H16V6H18V0ZM16 16H12V18H18V12H16ZM2 12H0V18H6V16H2Z" /></svg>
                </Control>
                <Control $top={173}>
                  <svg width="18" height="31" viewBox="0 0 18 31">
                    <path d="M4 10H14Q17 11 16.5 15L17.3 20.5H13.8L13.2 30H9.8L9.2 22H8.6L8 30H4.8L4.2 20.5H.7L1.2 15Q1 11 4 10Z" fill="#f6bd4e" stroke="#b98d3c" strokeWidth=".8" />
                    <path d="M5 11H13L9 16.5Z" fill="#e28237" />
                    <circle cx="9" cy="6" r="5.3" fill="#fbc14e" stroke="#b98d3c" strokeWidth=".8" />
                  </svg>
                </Control>
                <Control $top={32} $h={81}>
                  <svg width="40" height="81" viewBox="0 0 40 81">
                    <path d="M18 11H22V18.2H29V22H22V29H18V22H11V18.2H18ZM11 59H29V63H11Z" fill="#747474" />
                    <path d="M5 40.5H35" stroke="#e6e6e6" />
                  </svg>
                </Control>
              </Controls>
            </MapFrame>
          </MapCard>
        </Eat>
      </Page>
    </>
  );
}
